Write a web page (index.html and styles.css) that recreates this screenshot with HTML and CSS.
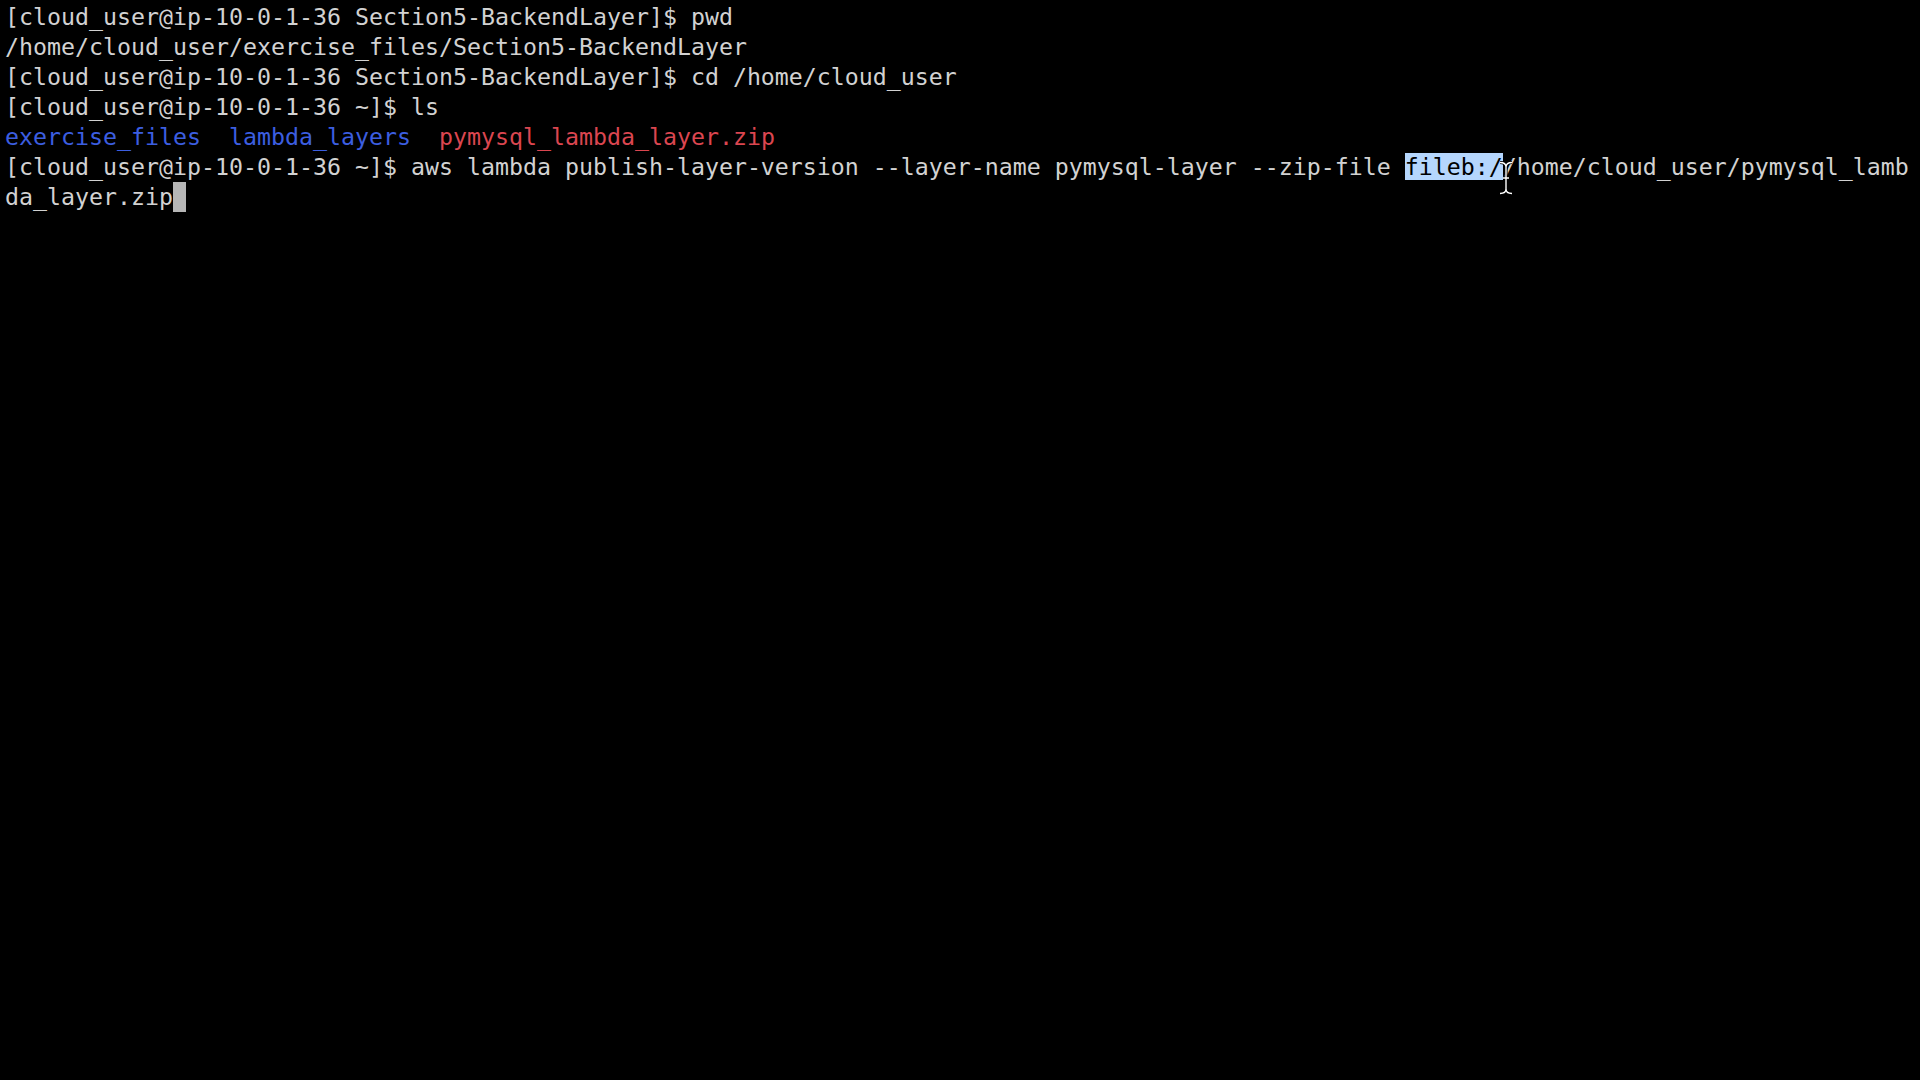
FILE: index.html
```html
<!DOCTYPE html>
<html>
<head>
<meta charset="utf-8">
<link rel="stylesheet" href="styles.css">
</head>
<body>
<div class="term">
<div class="line">[cloud_user@ip-10-0-1-36 Section5-BackendLayer]$ pwd</div>
<div class="line">/home/cloud_user/exercise_files/Section5-BackendLayer</div>
<div class="line">[cloud_user@ip-10-0-1-36 Section5-BackendLayer]$ cd /home/cloud_user</div>
<div class="line">[cloud_user@ip-10-0-1-36 ~]$ ls</div>
<div class="line"><span class="dir">exercise_files</span>  <span class="dir">lambda_layers</span>  <span class="zip">pymysql_lambda_layer.zip</span></div>
<div class="line">[cloud_user@ip-10-0-1-36 ~]$ aws lambda publish-layer-version --layer-name pymysql-layer --zip-file <span class="sel">fileb:/</span><span class="ibeam-wrap">/<svg class="ibeam" width="16" height="34" viewBox="0 0 16 34"><path d="M2 1.5 C6 1.5 8 3 8 6 C8 3 10 1.5 14 1.5 M8 6 V28 M2 32.5 C6 32.5 8 31 8 28 C8 31 10 32.5 14 32.5 M5 17 H11" fill="none" stroke="#000" stroke-width="3.2"/><path d="M2 1.5 C6 1.5 8 3 8 6 C8 3 10 1.5 14 1.5 M8 6 V28 M2 32.5 C6 32.5 8 31 8 28 C8 31 10 32.5 14 32.5 M5 17 H11" fill="none" stroke="#fff" stroke-width="1.4"/></svg></span>home/cloud_user/pymysql_lamb</div>
<div class="line">da_layer.zip<span class="cursor"> </span></div>
</div>
</body>
</html>
```
FILE: styles.css
```css
html, body {
  margin: 0;
  padding: 0;
  background: #000;
  width: 1920px;
  height: 1080px;
  overflow: hidden;
}
.term {
  padding: 2px 0 0 5px;
  font-family: "DejaVu Sans Mono", "Liberation Mono", monospace;
  font-size: 23.25px;
  line-height: 30px;
  color: #d2d2d2;
}
.line {
  white-space: pre;
  height: 30px;
}
.dir { color: #3c5ee0; }
.zip { color: #db4650; }
.sel {
  background: #b5d6fd;
  color: #000;
}
.ibeam-wrap {
  position: relative;
}
.ibeam {
  position: absolute;
  left: -5px;
  top: 8px;
}
.cursor {
  display: inline-block;
  width: 13px;
  height: 30px;
  vertical-align: top;
  background: #b6b6b6;
}
```
